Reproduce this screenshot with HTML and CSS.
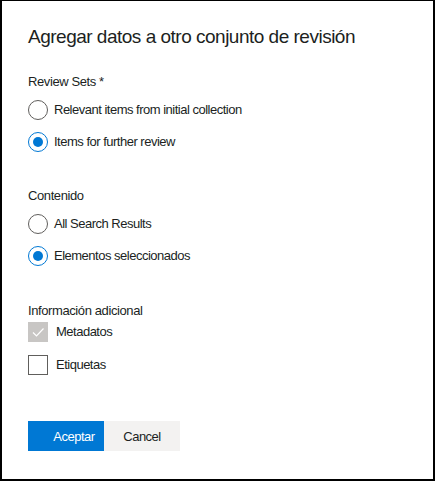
FILE: index.html
```html
<!DOCTYPE html>
<html lang="es">
<head>
<meta charset="utf-8">
<title>Agregar datos</title>
<link rel="stylesheet" href="styles.css">
</head>
<body>
<div class="dialog">
  <h1 class="title">Agregar datos a otro conjunto de revisión</h1>

  <div class="group">
    <div class="label">Review Sets *</div>
    <div class="options">
      <div class="option"><span class="radio"></span><span class="text">Relevant items from initial collection</span></div>
      <div class="option"><span class="radio checked"></span><span class="text">Items for further review</span></div>
    </div>
  </div>

  <div class="group">
    <div class="label">Contenido</div>
    <div class="options">
      <div class="option"><span class="radio"></span><span class="text">All Search Results</span></div>
      <div class="option"><span class="radio checked"></span><span class="text">Elementos seleccionados</span></div>
    </div>
  </div>

  <div class="group group-info">
    <div class="label">Información adicional</div>
    <div class="checks">
      <div class="option"><span class="checkbox disabled"><svg viewBox="0 0 20 20" width="20" height="20"><path d="M5 10.5 L8.5 14 L15.5 6.5" fill="none" stroke="#ffffff" stroke-width="1.2"/></svg></span><span class="text ctext">Metadatos</span></div>
      <div class="option"><span class="checkbox"></span><span class="text ctext">Etiquetas</span></div>
    </div>
  </div>

  <div class="actions">
    <button class="btn primary">Aceptar</button>
    <button class="btn secondary">Cancel</button>
  </div>
</div>
</body>
</html>
```
FILE: styles.css
```css
html, body {
  margin: 0;
  padding: 0;
  background: #ffffff;
}
.dialog {
  box-sizing: border-box;
  width: 435px;
  height: 481px;
  border-style: solid;
  border-color: #000000;
  border-width: 1px 2px 2px 2px;
  padding: 22px 26px 0 26px;
  font-family: "Liberation Sans", Arial, sans-serif;
  color: #201f1e;
  display: flex;
  flex-direction: column;
}
.title {
  margin: 0;
  font-size: 19px;
  font-weight: 400;
  line-height: 28px;
  letter-spacing: -0.5px;
  color: #201f1e;
}
.group {
  margin-top: 21px;
  display: flex;
  flex-direction: column;
}
.group + .group {
  margin-top: 34px;
}
.group.group-info {
  margin-top: 35px;
}
.label {
  font-size: 13px;
  line-height: 20px;
  letter-spacing: -0.4px;
}
.options {
  display: flex;
  flex-direction: column;
  gap: 12px;
  margin-top: 8px;
}
.checks {
  display: flex;
  flex-direction: column;
  gap: 13px;
  margin-top: 1px;
}
.option {
  display: flex;
  align-items: center;
  height: 20px;
}
.text {
  font-size: 13px;
  line-height: 20px;
  letter-spacing: -0.5px;
  margin-left: 6px;
}
.ctext {
  margin-left: 8px;
}
.radio {
  box-sizing: border-box;
  width: 20px;
  height: 20px;
  border-radius: 50%;
  border: 1px solid #605e5c;
  flex: none;
  display: flex;
  align-items: center;
  justify-content: center;
}
.radio.checked {
  border-color: #0078d4;
}
.radio.checked::after {
  content: "";
  width: 10px;
  height: 10px;
  border-radius: 50%;
  background: #0078d4;
}
.checkbox {
  box-sizing: border-box;
  width: 20px;
  height: 20px;
  border: 1px solid #605e5c;
  flex: none;
  display: flex;
}
.checkbox.disabled {
  border: none;
  background: #c8c6c4;
}
.actions {
  display: flex;
  margin-top: 46px;
}
.btn {
  width: 76px;
  height: 30px;
  border: none;
  margin: 0;
  font-family: "Liberation Sans", Arial, sans-serif;
  font-size: 13px;
  letter-spacing: -0.5px;
  padding: 0;
  cursor: pointer;
}
.primary {
  background: #0078d4;
  color: #ffffff;
  padding-left: 16px;
}
.secondary {
  background: #f3f2f1;
  color: #201f1e;
}
```
